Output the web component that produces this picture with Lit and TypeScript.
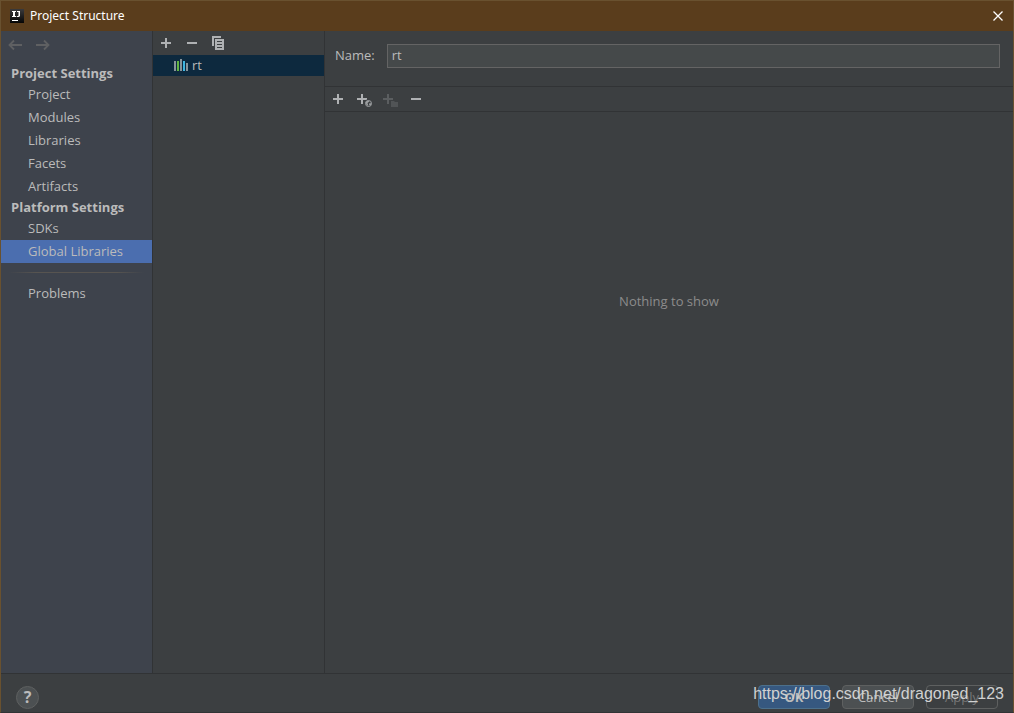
import { LitElement, html, svg, css, nothing } from "lit";
import { customElement, state } from "lit/decorators.js";
import { classMap } from "lit/directives/class-map.js";

interface Section {
  title: string;
  items: string[];
}

const SECTIONS: Section[] = [
  { title: "Project Settings", items: ["Project", "Modules", "Libraries", "Facets", "Artifacts"] },
  { title: "Platform Settings", items: ["SDKs", "Global Libraries"] },
];

const icon = (body: unknown) => html`<svg width="16" height="16" viewBox="0 0 16 16" aria-hidden="true">${body}</svg>`;

const plus = icon(svg`<path fill="#afb1b3" d="M7 3h2v4h4v2H9v4H7V9H3V7h4z"/>`);
const minus = icon(svg`<path fill="#afb1b3" d="M3 7h10v2H3z"/>`);
const copy = icon(svg`<path fill="#afb1b3" d="M2 1h9v2H4v8H2z"/><path fill="#afb1b3" fill-rule="evenodd" d="M5 4h9v11H5zM7 6v1h5V6zM7 9v1h5V9zM7 12v1h5v-1z"/>`);
const plusWeb = icon(svg`<path fill="#afb1b3" d="M5 3h2v4h4v2H7v4H5V9H1V7h4z"/>
  <circle cx="12.500" cy="12.500" r="4.200" fill="#3c3f41"/><circle cx="12.500" cy="12.500" r="3" fill="none" stroke="#9da0a2"/>
  <path fill="#9da0a2" d="M9.500 11l2.500-1.500 1.500 1-2 1.500 1 3-2-1zM13.500 12l2 .5-1 2-1.500-.5z"/>`);
const plusFolder = icon(svg`<path fill="#5b5e60" d="M5 3h2v4h4v2H7v4H5V9H1V7h4z"/>
  <path fill="#3c3f41" d="M8 9h8v7H8z"/><path fill="#515456" d="M9 10h3l1 1h3v5H9z"/>`);
const back = icon(svg`<path fill="none" stroke="#5f6062" stroke-width="1.800" d="M15 8H3M7 3.500L2.500 8l4.500 4.500"/>`);
const forward = icon(svg`<path fill="none" stroke="#5f6062" stroke-width="1.800" d="M2 8h12M10 3.500L14.500 8l-4.500 4.500"/>`);
const library = icon(svg`<path fill="#87939a" d="M1 3h2v10H1zM7 1h2v12H7zM13 5h2v8h-2z"/><path fill="#62b543" d="M4 3h2v10H4z"/><path fill="#40b6e0" d="M10 3h2v10h-2z"/>`);
const close = html`<svg width="10" height="10" viewBox="0 0 10 10" aria-hidden="true"><path stroke="#fff" stroke-width="1.300" d="M.5.5l9 9M9.500.5l-9 9"/></svg>`;
const logo = html`<svg width="14" height="14" viewBox="0 0 14 14" aria-hidden="true">
  <defs><linearGradient id="shade" x2="0" y2="1"><stop stop-color="#3a3a3c"/><stop offset="1" stop-color="#050505"/></linearGradient></defs>
  <rect width="14" height="14" fill="url(#shade)"/>
  <path fill="#fff" d="M2 2h4v1H5v4h1v1H2V7h1V3H2zM7 2h3v5L9 8H7L6.500 7H8l.500-.5V3H7zM2 11h6v1H2z"/></svg>`;

@customElement("app-root")
export class AppRoot extends LitElement {
  @state() private selected = "Global Libraries";
  @state() private name = "rt";

  static styles = css`
    :host {
      display: block;
      font: 13px/20px "Open Sans", "Noto Sans", sans-serif;
      color: #bbbbbb;
    }
    * { box-sizing: border-box; }
    button, input { font: inherit; color: inherit; margin: 0; }
    button { background: none; border: 0; padding: 0; }
    svg { display: block; }
    .dialog {
      position: relative;
      display: flex;
      flex-direction: column;
      height: 100vh;
      border: 1px solid #69512f;
      border-bottom-color: #313335;
      background: #3c3f41;
      overflow: hidden;
    }
    .titlebar {
      display: flex;
      align-items: center;
      gap: 6px;
      flex: none;
      height: 30px;
      padding: 0 10px 0 9px;
      background: #5a3d1c;
      color: #fff;
      font: 12px/20px "Noto Sans", sans-serif;
    }
    .title { flex: 1; margin: 0; font: inherit; }
    .body { display: flex; flex: 1; min-height: 0; }
    .sidebar {
      flex: none;
      width: 152px;
      background: #3e434c;
      border-right: 1px solid #313335;
    }
    .history { display: flex; align-items: flex-start; gap: 11px; height: 33px; padding: 6px 6px 0; }
    .heading { margin: 0; padding: 0 10px; font-size: 13px; font-weight: bold; line-height: 19px; }
    .item {
      display: block;
      width: 100%;
      height: 23px;
      padding: 0 27px;
      line-height: 23px;
      text-align: left;
      white-space: nowrap;
    }
    .item.selected { background: #4b6eaf; }
    .rule {
      height: 1px;
      margin: 9px 8px;
      border: 0;
      background: linear-gradient(90deg, transparent, #575450 20%, #575450 80%, transparent);
    }
    .list { flex: none; width: 172px; border-right: 1px solid #313335; }
    .toolbar { display: flex; align-items: center; gap: 10px; height: 24px; padding: 0 5px; }
    .entry {
      display: flex;
      align-items: center;
      gap: 3px;
      width: 100%;
      height: 21px;
      padding-left: 20px;
      background: #0d293e;
      line-height: 19px;
    }
    .detail { display: flex; flex-direction: column; flex: 1; min-width: 0; }
    .field { display: flex; align-items: center; gap: 12px; padding: 13px 13px 18px 10px; }
    .field input {
      flex: 1;
      min-width: 0;
      height: 24px;
      padding: 0 4px 2px;
      background: #45494a;
      border: 1px solid #646464;
      border-radius: 0;
      outline: 0;
    }
    .field label { padding-bottom: 2px; }
    .classes { height: 26px; border: 1px solid #313335; border-width: 1px 0; }
    .empty { flex: 1; margin: 0; padding-top: 179px; text-align: center; color: #8c8c8c; }
    .footer {
      display: flex;
      align-items: center;
      gap: 12px;
      flex: none;
      height: 39px;
      padding: 8px 15px 0 15px;
      border-top: 1px solid #313335;
    }
    .help {
      width: 23px;
      height: 23px;
      margin-right: auto;
      border: 1px solid #5e6060;
      border-radius: 50%;
      background: #4c5052;
      font: bold 16px/20px "Noto Sans", sans-serif;
    }
    .button {
      width: 72px;
      height: 24px;
      border: 1px solid #5e6060;
      border-radius: 4px;
      background: #4c5052;
      line-height: 22px;
    }
    .button.primary { background: #365880; border-color: #4c708c; font-weight: bold; }
    .button:disabled { background: none; color: #777777; }
    .watermark {
      position: absolute;
      right: 9px;
      bottom: 8px;
      font: 16px/20px "Liberation Sans", sans-serif;
      color: #d0d1d1;
      pointer-events: none;
    }
  `;

  private item(label: string) {
    const on = label === this.selected;
    return html`<button
      class=${classMap({ item: true, selected: on })}
      aria-current=${on ? "page" : nothing}
      @click=${() => (this.selected = label)}
    >${label}</button>`;
  }

  render() {
    return html`
      <div class="dialog">
        <header class="titlebar">
          ${logo}
          <h1 class="title">Project Structure</h1>
          <button aria-label="Close">${close}</button>
        </header>
        <main class="body">
          <nav class="sidebar">
            <div class="history">
              <button aria-label="Back" disabled>${back}</button>
              <button aria-label="Forward" disabled>${forward}</button>
            </div>
            ${SECTIONS.map((s) => html`<h2 class="heading">${s.title}</h2>${s.items.map((i) => this.item(i))}`)}
            <hr class="rule" />
            ${this.item("Problems")}
          </nav>
          <section class="list">
            <div class="toolbar">
              <button aria-label="Add library">${plus}</button>
              <button aria-label="Remove library">${minus}</button>
              <button aria-label="Copy library">${copy}</button>
            </div>
            <button class="entry">${library}<span>${this.name}</span></button>
          </section>
          <section class="detail">
            <div class="field">
              <label for="name">Name:</label>
              <input id="name" type="text" .value=${this.name}
                @input=${(e: Event) => (this.name = (e.target as HTMLInputElement).value)} />
            </div>
            <div class="toolbar classes">
              <button aria-label="Add">${plus}</button>
              <button aria-label="Add from URL">${plusWeb}</button>
              <button aria-label="Add folder" disabled>${plusFolder}</button>
              <button aria-label="Remove">${minus}</button>
            </div>
            <p class="empty">Nothing to show</p>
          </section>
        </main>
        <footer class="footer">
          <button class="help" aria-label="Help">?</button>
          <button class="button primary">OK</button>
          <button class="button">Cancel</button>
          <button class="button" disabled>Apply</button>
        </footer>
        <span class="watermark">https://blog.csdn.net/dragoned_123</span>
      </div>
    `;
  }
}
